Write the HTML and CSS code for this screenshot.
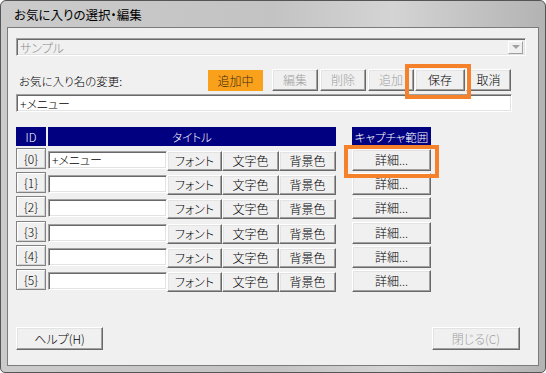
FILE: index.html
```html
<!DOCTYPE html>
<html>
  <head>
    <title>お気に入りの選択・編集</title>
    <link rel="stylesheet" href="styles.css">
  </head>
  <body>

    <div class="window">
      <div class="titlebar">お気に入りの選択・編集</div>

      <div class="client">
        <div class="combo">
          <span class="combo-text">サンプル</span>
          <span class="combo-arrow"></span>
        </div>

        <div class="toolbar">
          <label class="name-label" for="favName">お気に入り名の変更:</label>
          <span class="badge">追加中</span>
          <button class="btn btn-edit" disabled>編集</button>
          <button class="btn btn-del" disabled>削除</button>
          <button class="btn btn-add" disabled>追加</button>
          <button class="btn btn-save mark-save">保存</button>
          <button class="btn btn-cancel">取消</button>
        </div>

        <input type="text" id="favName" class="field name-input" value="+メニュー">

        <div class="grid">
          <div class="thead">
            <div class="th th-id">ID</div>
            <div class="th th-title">タイトル</div>
            <div class="th th-cap">キャプチャ範囲</div>
          </div>

          <div class="rows">
            <div class="row">
              <div class="cell-id">{0}</div>
              <input type="text" class="field cell-input" value="+メニュー">
              <button class="btn btn-font">フォント</button>
              <button class="btn btn-color">文字色</button>
              <button class="btn btn-bg">背景色</button>
              <button class="btn btn-detail mark-detail">詳細...</button>
            </div>
            <div class="row">
              <div class="cell-id">{1}</div>
              <input type="text" class="field cell-input">
              <button class="btn btn-font">フォント</button>
              <button class="btn btn-color">文字色</button>
              <button class="btn btn-bg">背景色</button>
              <button class="btn btn-detail">詳細...</button>
            </div>
            <div class="row">
              <div class="cell-id">{2}</div>
              <input type="text" class="field cell-input">
              <button class="btn btn-font">フォント</button>
              <button class="btn btn-color">文字色</button>
              <button class="btn btn-bg">背景色</button>
              <button class="btn btn-detail">詳細...</button>
            </div>
            <div class="row">
              <div class="cell-id">{3}</div>
              <input type="text" class="field cell-input">
              <button class="btn btn-font">フォント</button>
              <button class="btn btn-color">文字色</button>
              <button class="btn btn-bg">背景色</button>
              <button class="btn btn-detail">詳細...</button>
            </div>
            <div class="row">
              <div class="cell-id">{4}</div>
              <input type="text" class="field cell-input">
              <button class="btn btn-font">フォント</button>
              <button class="btn btn-color">文字色</button>
              <button class="btn btn-bg">背景色</button>
              <button class="btn btn-detail">詳細...</button>
            </div>
            <div class="row">
              <div class="cell-id">{5}</div>
              <input type="text" class="field cell-input">
              <button class="btn btn-font">フォント</button>
              <button class="btn btn-color">文字色</button>
              <button class="btn btn-bg">背景色</button>
              <button class="btn btn-detail">詳細...</button>
            </div>
          </div>
        </div>

        <div class="footer">
          <button class="btn btn-help">ヘルプ(H)</button>
          <button class="btn btn-close" disabled>閉じる(C)</button>
        </div>
      </div>
    </div>

  </body>
</html>
```

FILE: styles.css
```css
* {
  box-sizing: border-box;
}

body {
  margin: 0;
  font-family: "Noto Sans CJK JP", "Liberation Sans", sans-serif;
  font-size: 12px;
  font-weight: 300;
  font-feature-settings: "palt";
  color: #000;
  background-color: #fff;
}

/* window frame */
.window {
  width: 546px;
  height: 373px;
  border: 1px solid #555;
  border-radius: 6px 6px 5px 5px;
  padding: 0 6px 6px 6px;
  display: flex;
  flex-direction: column;
  background: linear-gradient(to right, #cbcbcb 0%, #c3c3c3 50%, #d4d4d4 72%, #b3b3b3 100%);
}

.titlebar {
  height: 26px;
  line-height: 27px;
  padding-left: 7px;
  font-size: 12.5px;
  font-weight: 400;
  color: #000;
}

.client {
  flex: 1;
  border: 1px solid #7b7b7b;
  background-color: #f0f0f0;
  padding: 10px 0 15px 8px;
  display: flex;
  flex-direction: column;
}

/* common controls */
.btn {
  font: inherit;
  font-feature-settings: "palt";
  color: #000;
  background-color: #f0f0f0;
  border: 1px solid;
  border-color: #fff #696969 #696969 #fff;
  box-shadow: inset -1px -1px 0 #a0a0a0, inset 1px 1px 0 #e3e3e3;
  padding: 0;
  line-height: 1;
  position: relative;
}

.btn:disabled {
  color: #a0a0a0;
}

.field {
  font: inherit;
  font-feature-settings: "palt";
  color: #000;
  background-color: #fff;
  border: 1px solid;
  border-color: #a0a0a0 #fff #fff #a0a0a0;
  box-shadow: inset 1px 1px 0 #696969, inset -1px -1px 0 #e3e3e3;
  padding: 0 3px;
  outline: none;
}

/* combo */
.combo {
  width: 510px;
  height: 18px;
  display: flex;
  align-items: center;
  justify-content: space-between;
  border: 1px solid;
  border-color: #a0a0a0 #fff #fff #a0a0a0;
  box-shadow: inset 1px 1px 0 #696969, inset -1px -1px 0 #e3e3e3;
  padding: 0 2px 0 3px;
}

.combo-text {
  color: #8c8c8c;
}

.combo-arrow {
  width: 15px;
  height: 13px;
  border: 1px solid;
  border-color: #fff #a0a0a0 #a0a0a0 #fff;
  background-color: #f0f0f0;
  display: flex;
  align-items: center;
  justify-content: center;
}

.combo-arrow::after {
  content: "";
  border-left: 4px solid transparent;
  border-right: 4px solid transparent;
  border-top: 4px solid #a0a0a0;
}

/* toolbar */
.toolbar {
  margin-top: 13px;
  height: 22px;
  display: flex;
  align-items: flex-start;
  padding-left: 3px;
}

.name-label {
  width: 189px;
  font-size: 11.5px;
  line-height: 24px;
}

.badge {
  width: 55px;
  height: 21px;
  margin-top: 1px;
  margin-right: 9px;
  background-color: #f9a11b;
  color: #3b2a0c;
  display: flex;
  align-items: center;
  justify-content: center;
}

.toolbar .btn {
  width: 46px;
  height: 22px;
}

.btn-del,
.btn-add {
  margin-left: 2px;
}

.toolbar .btn-save {
  width: 50px;
  margin-left: 1px;
}

.toolbar .btn-cancel {
  width: 45px;
  margin-left: 1px;
}

.mark-save::after,
.mark-detail::after {
  content: "";
  position: absolute;
  border: 4px solid #f5812a;
  z-index: 2;
}

.mark-save::after {
  left: -11px;
  right: -7px;
  top: -6px;
  bottom: -9px;
}

.mark-detail::after {
  left: -9px;
  right: -9px;
  top: -5px;
  bottom: -8px;
}

.name-input {
  margin-top: 3px;
  width: 496px;
  height: 18px;
}

/* grid */
.grid {
  margin-top: 15px;
}

.thead {
  display: flex;
  height: 19px;
}

.th {
  background-color: #000080;
  color: #fff;
  display: flex;
  align-items: center;
  justify-content: center;
  font-size: 11.5px;
}

.th-id {
  width: 30px;
}

.th-title {
  width: 288px;
  margin-left: 2px;
}

.th-cap {
  width: 79px;
  margin-left: 16px;
}

.rows {
  margin-top: 1.5px;
  display: flex;
  flex-direction: column;
  gap: 1.35px;
}

.row {
  display: flex;
  align-items: flex-start;
  height: 23px;
}

.cell-id {
  width: 30px;
  height: 21px;
  border: 1px solid #828282;
  box-shadow: inset 1px 1px 0 #fff, inset -1px -1px 0 #d0d0d0;
  display: flex;
  align-items: center;
  justify-content: center;
}

.cell-input {
  width: 119px;
  height: 18px;
  margin-left: 2px;
  margin-top: 3px;
}

.row .btn {
  height: 20px;
  margin-top: 3px;
}

.btn-font {
  width: 55px;
}

.btn-color,
.btn-bg {
  width: 57px;
}

.row .btn-detail {
  width: 79px;
  height: 22px;
  margin-top: 1px;
  margin-left: 16px;
}

/* footer */
.footer {
  margin-top: auto;
  width: 504px;
  display: flex;
  justify-content: space-between;
}

.footer .btn {
  height: 23px;
}

.btn-help {
  width: 87px;
}

.btn-close {
  width: 88px;
}
```
